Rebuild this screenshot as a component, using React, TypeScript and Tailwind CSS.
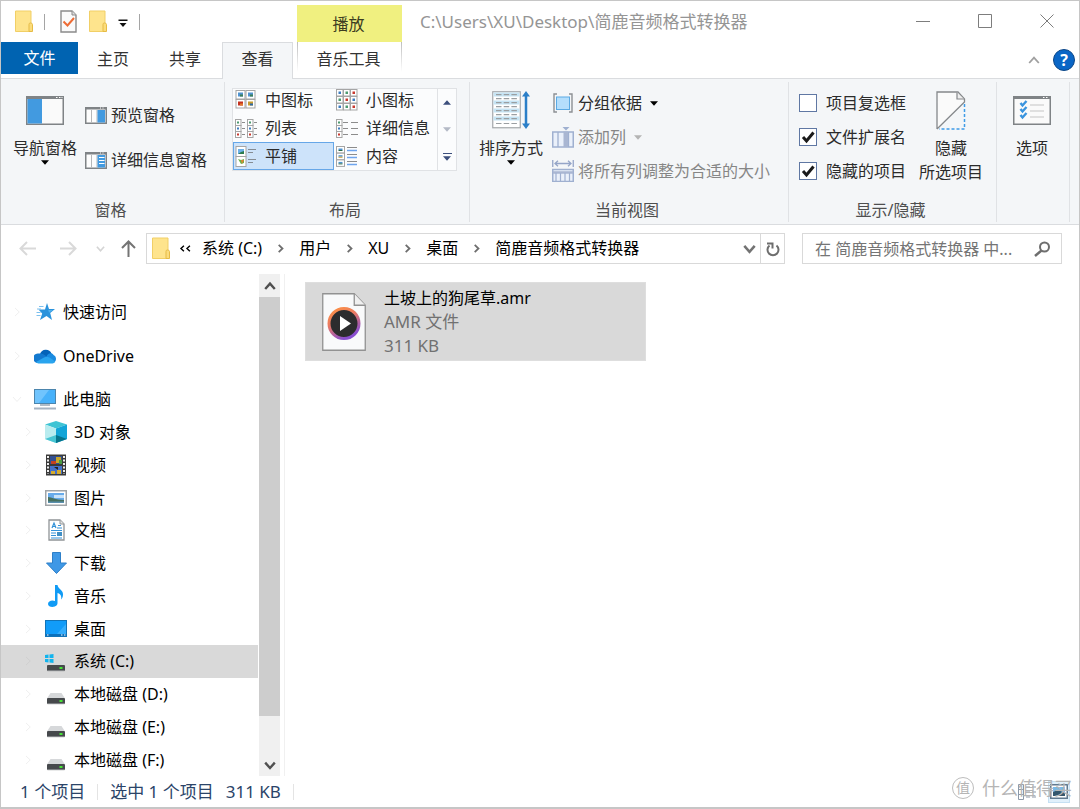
import React, { ReactNode, useState } from "react";

/* ---------- Small glyphs ---------- */

function Caret({ className = "text-black" }: { className?: string }) {
  return (
    <svg width="8" height="5" viewBox="0 0 8 5" className={className} aria-hidden="true">
      <path d="M0 0.300h8L4 4.800z" fill="currentColor" />
    </svg>
  );
}

function Chevron({ dir, size = 10, width = 1.8, className = "" }: { dir: "up" | "down" | "right"; size?: number; width?: number; className?: string }) {
  const d = { up: "M1 7.5 5 3l4 4.5", down: "M1 3l4 4.5L9 3", right: "M3 1l4.2 4L3 9" }[dir];
  return (
    <svg width={size} height={size} viewBox="0 0 10 10" className={className} aria-hidden="true">
      <path d={d} fill="none" stroke="currentColor" strokeWidth={width} />
    </svg>
  );
}

function FolderIcon() {
  return (
    <svg width="18" height="23" viewBox="0 0 18 23" className="shrink-0" aria-hidden="true">
      <path d="M.5 1h15.500v20.500H.5z" fill="#fee48d" stroke="#f1cf66" />
      <path d="M14 14.500c0-1 .5-1.500 1.500-1.500s2 .5 2 1.500V21.500H14z" fill="#fbdc7c" stroke="#e6bb45" />
    </svg>
  );
}

function CheckPageIcon() {
  return (
    <svg width="17" height="23" viewBox="0 0 17 23" aria-hidden="true">
      <path d="M1 1h11l4 4v17H1z" fill="#fafafa" stroke="#8b8b8b" strokeWidth="1.400" />
      <path d="M12 1v4h4" fill="#ddd" stroke="#8b8b8b" />
      <path d="M3.500 11.500l4 4 6.500-7.500" fill="none" stroke="#ee6c35" strokeWidth="2" />
    </svg>
  );
}

/* ---------- Ribbon icons ---------- */

function NavPaneIcon() {
  return (
    <svg width="38" height="29" viewBox="0 0 38 29" aria-hidden="true">
      <rect x=".75" y=".75" width="36.500" height="27.500" fill="#fafafa" stroke="#7f8386" strokeWidth="1.500" />
      <path d="M0 0h38v3H0z" fill="#7f8386" />
      <path d="M30 1.500h1.500M33 1.500h1.500M35.500 1.500h1" stroke="#fff" />
      <path d="M1.500 3h14.500v24.500H1.500z" fill="#429ae0" />
    </svg>
  );
}

function SidePaneIcon({ lines = false }: { lines?: boolean }) {
  return (
    <svg width="22" height="17" viewBox="0 0 22 17" aria-hidden="true">
      <rect x=".75" y=".75" width="20.500" height="15.500" fill="#fdfdfd" stroke="#7f8386" strokeWidth="1.500" />
      <path d="M0 0h22v2.500H0z" fill="#7f8386" />
      <path d="M15 1h1M17.500 1h1" stroke="#fff" />
      <path d="M6.500 3v12.500M12 3v12.500" stroke="#b5b7b9" />
      <path d="M12.500 3H20v12.500h-7.500z" fill="#429ae0" />
      {lines && <path d="M14 5.500h5.500M14 8.500h5.500M14 11.500h5.500" stroke="#fff" />}
    </svg>
  );
}

const dotColors = ["#3d7cc0", "#4d9a70", "#c8392f"];

function MediumIcons() {
  return (
    <svg width="22" height="20" viewBox="0 0 22 20" aria-hidden="true">
      {[0, 1].map((c) =>
        [0, 1].map((r) => (
          <g key={`${c}${r}`}>
            <rect x={1 + c * 10} y={0.5 + r * 9} width="9" height="8.500" fill="#fff" stroke="#a5a5a5" />
            <rect x={3 + c * 10} y={2.5 + r * 9} width="5" height="4" fill={r ? (c ? "#c69a2d" : "#c4311d") : "#4f93cf"} />
            <rect x={5 + c * 10} y={4.5 + r * 9} width="3" height="2" fill={r ? (c ? "#2e6aa6" : "#e27b2c") : "#3e8059"} />
          </g>
        ))
      )}
    </svg>
  );
}

function SmallIcons() {
  return (
    <svg width="22" height="22" viewBox="0 0 22 22" aria-hidden="true">
      {[0, 1, 2].map((c) =>
        [0, 1, 2].map((r) => (
          <g key={`${c}${r}`}>
            <rect x={0.5 + c * 7} y={0.5 + r * 7} width="6.500" height="6.500" fill="#fff" stroke="#a5a5a5" />
            <rect x={2.5 + c * 7} y={2.5 + r * 7} width="2.500" height="2.500" fill={dotColors[(c + (r === 1 ? 1 : 0)) % 3]} />
          </g>
        ))
      )}
    </svg>
  );
}

function ListIcon({ details = false }: { details?: boolean }) {
  const cols = details ? [0] : [0, 12];
  return (
    <svg width="22" height="19" viewBox="0 0 22 19" aria-hidden="true">
      {cols.map((x) =>
        [0, 1, 2].map((r) => (
          <g key={`${x}${r}`}>
            <rect x={x + 0.5} y={0.5 + r * 6} width="5.500" height="6" fill="#fff" stroke="#a5a5a5" />
            <rect x={x + 2} y={2.5 + r * 6} width="2" height="2" fill={dotColors[r === 1 ? 0 : r === 0 ? 1 : 2]} />
            <path d={`M${x + 7} ${3.5 + r * 6}h${details ? 5 : 3}${details ? "m3 0h7" : ""}`} stroke="#8c8c8c" />
          </g>
        ))
      )}
    </svg>
  );
}

function TilesIcon() {
  return (
    <svg width="22" height="21" viewBox="0 0 22 21" aria-hidden="true">
      <rect x="1" y=".5" width="10" height="10" fill="#fff" stroke="#a5a5a5" />
      <rect x="1" y="10.500" width="10" height="10" fill="#fff" stroke="#a5a5a5" />
      <path d="M3 3h6v5H3z" fill="#6db1e8" />
      <path d="M3 8l3-2 3-1v3z" fill="#2c7c4e" />
      <path d="M3 13l3 1 3-1v4l-3 1z" fill="#69b34c" />
      <path d="M6 14l3 0-2 4z" fill="#e0842f" />
      <path d="M13 3.500h8M13 6.500h5M13 13.500h8M13 16.500h5" stroke="#858c93" />
    </svg>
  );
}

function ContentIcon() {
  return (
    <svg width="22" height="21" viewBox="0 0 22 21" aria-hidden="true">
      {[0, 1, 2].map((r) => (
        <g key={r}>
          <rect x=".5" y={0.5 + r * 6.7} width="8" height="6.500" fill="#fff" stroke="#a5a5a5" />
          <rect x="2.500" y={2.5 + r * 6.7} width="4" height="1.500" fill="#4f93cf" />
          <rect x="2.500" y={4 + r * 6.7} width="4" height="1" fill={r === 1 ? "#c69a2d" : "#2c6c4e"} />
          <path d={`M11 ${1.5 + r * 7}h10`} stroke="#8c8c8c" />
          <path d={`M11 ${4.5 + r * 7}h10`} stroke="#6ea5ee" strokeWidth="1.500" />
        </g>
      ))}
    </svg>
  );
}

function SortIcon() {
  return (
    <svg width="38" height="38" viewBox="0 0 38 38" aria-hidden="true">
      <rect x=".75" y=".75" width="27.500" height="36" fill="#fff" stroke="#a3a7aa" strokeWidth="1.200" />
      <path d="M1.500 1.500h26v4h-26zM1.500 9.500h26v4h-26zM1.500 17.500h26v4h-26zM1.500 25.500h26v4h-26z" fill="#c6e4f4" />
      <path d="M4 3.700h21M4 7.700h21M4 11.700h21M4 15.700h21M4 19.700h21M4 23.700h21M4 27.700h21M4 32.500h21" stroke="#9b9fa2" strokeDasharray="5.500 2.200" strokeWidth="1.200" />
      <path d="M34 4v30" stroke="#2b7fc8" strokeWidth="2.500" />
      <path d="M34 0l4 5.500h-8zM34 38l4-5.500h-8z" fill="#2b7fc8" />
    </svg>
  );
}

function GroupByIcon() {
  return (
    <svg width="20" height="20" viewBox="0 0 20 20" aria-hidden="true">
      <path d="M4 1H1v18h3M16 1h3v18h-3" fill="none" stroke="#8c9094" strokeWidth="1.400" />
      <rect x="3.500" y="4" width="13" height="12.500" fill="#b4defc" stroke="#5aa9e3" />
    </svg>
  );
}

function AddColumnIcon() {
  return (
    <svg width="22" height="21" viewBox="0 0 22 21" aria-hidden="true">
      <rect x=".75" y="5" width="20.500" height="15" fill="#eaf0fa" stroke="#9fb0d0" strokeWidth="1.500" />
      <path d="M6 5v15M16.500 5v15" stroke="#9fb0d0" strokeWidth="1.300" />
      <path d="M11.500 4.500H16V20h-4.500z" fill="#a9b6d2" />
      <path d="M10.500 0h7L14 3.500z" fill="#9fb0d0" />
    </svg>
  );
}

function FitColumnsIcon() {
  return (
    <svg width="22" height="22" viewBox="0 0 22 22" aria-hidden="true">
      <path d="M.75 0v7M21.250 0v7M3 3.500h16M6 .8L3 3.500l3 2.700M16 .8l3 2.700-3 2.700" fill="none" stroke="#95a5c8" strokeWidth="1.300" />
      <rect x=".75" y="9.500" width="20.500" height="12" fill="#eaf0fa" stroke="#9fb0d0" strokeWidth="1.500" />
      <path d="M1 12.500h20" stroke="#a9b6d2" strokeWidth="2.500" />
      <path d="M4 13v8M8.500 13v8M13 13v8M17.500 13v8" stroke="#9fb0d0" strokeWidth="1.200" />
    </svg>
  );
}

function HideIcon() {
  return (
    <svg width="30" height="39" viewBox="0 0 30 39" aria-hidden="true">
      <path d="M1 38V1h21l6 7v3z" fill="#fafafa" />
      <path d="M1 38V1h21l6.500 7v3L1 38" fill="none" stroke="#85888b" strokeWidth="1.300" />
      <path d="M21 1.500V8h7" fill="#eee" stroke="#85888b" strokeWidth="1.200" />
      <path d="M28.500 13v25H3" fill="none" stroke="#3e9be6" strokeWidth="1.500" strokeDasharray="3 2" />
    </svg>
  );
}

function OptionsIcon() {
  return (
    <svg width="38" height="29" viewBox="0 0 38 29" aria-hidden="true">
      <rect x=".75" y=".75" width="36.500" height="27.500" fill="#fafafa" stroke="#7f8386" strokeWidth="1.500" />
      <path d="M0 0h38v3H0z" fill="#7f8386" />
      <path d="M30 1.500h1.500M33 1.500h1.500" stroke="#fff" />
      {[0, 6, 12].map((y) => (
        <g key={y}>
          <path d={`M7.500 ${y + 7}l2 2.500 4-4.500`} fill="none" stroke="#3a94de" strokeWidth="2.400" />
          <path d={`M17 ${y + 9}h14`} stroke="#c4c4c4" />
        </g>
      ))}
    </svg>
  );
}

/* ---------- Navigation pane icons ---------- */

function StarIcon() {
  return (
    <svg width="20" height="18" viewBox="0 0 20 18" aria-hidden="true">
      <path d="M12 0l2 6h6l-4.800 4L17 17l-5.500-4L5 17l2.200-6.500L3.500 6.500H10z" fill="#2a93dc" />
      <path d="M4 3.500h4.500M2 6h4M1.500 9.500h4M1.500 12.500h4" stroke="#7cc0ee" />
      <path d="M12 2l1.200 5H18l-4 2.800z" fill="#4fb2f0" />
    </svg>
  );
}

function CloudIcon() {
  return (
    <svg width="22" height="15" viewBox="0 0 22 15" aria-hidden="true">
      <path d="M6 5A6.200 6.200 0 0117.500 4.500l-2 5-9 1.500z" fill="#0463b8" />
      <path d="M5 4.500c3-.5 5 .5 9 4L3 14A4.800 4.800 0 015 4.500z" fill="#1379cf" />
      <path d="M12.500 7.500c1.500-4 6-4 7-1.500 3.500 1.500 3 6 .5 8z" fill="#1a8be0" />
      <path d="M2 13l8-4.500c3-1.500 5-.5 11 4-1 1.800-2 2-3.500 2H5.500C4 14.500 3 14 2 13z" fill="#29a4ee" />
    </svg>
  );
}

function ComputerIcon() {
  return (
    <svg width="22" height="21" viewBox="0 0 22 21" aria-hidden="true">
      <rect x=".5" y=".5" width="21" height="14" fill="#47b1fa" stroke="#4c85ad" />
      <path d="M1 1h14L5 14H1z" fill="#70c4fd" />
      <path d="M6 16h10" stroke="#95a5b3" strokeWidth="1.500" />
      <path d="M0 19.500h22" stroke="#a5b3c2" strokeWidth="2" />
    </svg>
  );
}

function CubeIcon() {
  return (
    <svg width="22" height="22" viewBox="0 0 22 22" aria-hidden="true">
      <path d="M11 0l11 3.500-11 4-11-4z" fill="#3fc4d4" />
      <path d="M0 3.500l11 4V22L0 18z" fill="#b9ecef" />
      <path d="M0 18l11-4v8z" fill="#47c5d3" />
      <path d="M22 3.500l-11 4V22l11-4z" fill="#12a5d8" />
      <path d="M22 18l-11-4v8z" fill="#06758c" />
    </svg>
  );
}

function VideoIcon() {
  return (
    <svg width="20" height="22" viewBox="0 0 20 22" aria-hidden="true">
      <path d="M0 .5h20v21H0z" fill="#3a3a3a" />
      <path d="M2 2v18M18 2v18" stroke="#eee" strokeWidth="2" strokeDasharray="2 1.500" />
      <path d="M4 2h12v8H4z" fill="#324f91" />
      <path d="M4 12h12v8H4z" fill="#4371cc" />
      <path d="M5 7h5v3H5z" fill="#c34022" />
      <path d="M10 3h5v6h-5z" fill="#c8a62b" />
      <path d="M13 6h3v4h-3z" fill="#4a9b43" />
      <path d="M5 17h4v3H5zM11 16h4v4h-4z" fill="#d7ad2d" />
      <path d="M8 13h4v3z" fill="#222" />
    </svg>
  );
}

function PictureIcon() {
  return (
    <svg width="22" height="16" viewBox="0 0 22 16" aria-hidden="true">
      <rect x=".75" y=".75" width="20.500" height="14.500" fill="#fff" stroke="#a0a4a7" strokeWidth="1.500" />
      <path d="M3 3h16v10H3z" fill="#68abea" />
      <path d="M9 5h10v3H9z" fill="#c8e2f8" />
      <path d="M3 7c4 0 7 3 16 3v3H3z" fill="#47705e" />
      <path d="M3 11.500h16V13H3z" fill="#5a90b0" />
    </svg>
  );
}

function DocumentIcon() {
  return (
    <svg width="17" height="22" viewBox="0 0 17 22" aria-hidden="true">
      <path d="M1 1h11l4 4v16H1z" fill="#fff" stroke="#909497" strokeWidth="1.300" />
      <path d="M12 1v4h4" fill="#e5e5e5" stroke="#909497" />
      <path d="M4 9l2-5 2 5M5 7.500h2M10 6.500h3M9 9h5M3 11.500h11M3 14h5M3 16.500h5M3 19h11" fill="none" stroke="#3492d8" strokeWidth="1.200" />
      <path d="M9 13h5v4H9z" fill="#3f8fc5" />
    </svg>
  );
}

function DownloadIcon() {
  return (
    <svg width="21" height="22" viewBox="0 0 21 22" aria-hidden="true">
      <path d="M6.500.5h8V11h6l-10 10.500L.5 11h6z" fill="#3f98e6" stroke="#2d7fc8" />
    </svg>
  );
}

function MusicIcon() {
  return (
    <svg width="16" height="22" viewBox="0 0 16 22" aria-hidden="true">
      <path d="M7 0h2.500c.5 4 6 5 5.500 10-.1 2-1 3.500-2 4.500 1-4-1-6-3.500-6.500V18c0 5-9.500 5-9.500 1 0-3 4-4.500 7-3z" fill="#109bf5" />
    </svg>
  );
}

function DesktopIcon() {
  return (
    <svg width="22" height="17" viewBox="0 0 22 17" aria-hidden="true">
      <rect x=".5" y=".5" width="21" height="16" fill="#119cf9" stroke="#1274b8" />
      <path d="M12 14L21 4v10z" fill="#35aefd" />
      <path d="M1 15h20" stroke="#0a62a6" strokeWidth="1.500" />
      <path d="M2 15h1.500M16 15h1.500M19 15h1.500" stroke="#fff" />
    </svg>
  );
}

function DriveIcon({ system = false }: { system?: boolean }) {
  return (
    <svg width="22" height="18" viewBox="0 0 22 18" className="mt-1" aria-hidden="true">
      <path d="M5.500 6h11l3.500 5.500H2z" fill="#d6d8da" />
      <rect x="2" y="11" width="18" height="6" rx="1" fill="#46494c" />
      <path d="M2.500 16.700h17" stroke="#8b8e90" />
      <path d="M14.500 14h3" stroke="#46e236" strokeWidth="2" />
      {system && (
        <>
          <path d="M0 0h9.500v9H0z" fill="#d9d9d9" />
          <path d="M0 1l3.500-.5V4H0zM4.500.5L8.500 0v4h-4zM0 5h3.500v3.500L0 8zM4.500 5h4v4l-4-.5z" fill="#12b4ee" />
        </>
      )}
    </svg>
  );
}

function AudioFileIcon() {
  return (
    <svg width="44" height="58" viewBox="0 0 44 58" className="shrink-0" aria-hidden="true">
      <defs>
        <linearGradient id="ring" x1="0" y1="0" x2=".5" y2="1">
          <stop offset="0" stopColor="#ff9340" />
          <stop offset=".45" stopColor="#ea7a62" />
          <stop offset="1" stopColor="#8a4fd0" />
        </linearGradient>
      </defs>
      <path d="M.75.75h31.500l11 11.500v45H.75z" fill="#f9fafb" stroke="#929292" strokeWidth="1.300" />
      <path d="M32.250.75v11.500h11" fill="#f0f0f0" stroke="#929292" strokeWidth="1.300" />
      <circle cx="22" cy="30.500" r="15" fill="#2c2c2e" stroke="url(#ring)" strokeWidth="3" />
      <path d="M18 23l11 7.500L18 38z" fill="#fff" />
    </svg>
  );
}

/* ---------- Ribbon parts ---------- */

function RibbonGroup({ label, className, children }: { label: string; className: string; children: ReactNode }) {
  return (
    <section aria-label={label || undefined} className={`flex h-[140px] shrink-0 flex-col border-r border-[#e0e2e5] ${className}`}>
      <div className="flex flex-1 items-start">{children}</div>
      <div className="h-6 pr-1 text-center leading-6 text-[#4f4f4f]">{label}</div>
    </section>
  );
}

function BigButton({ icon, lines, caret = false, className = "" }: { icon: ReactNode; lines: string[]; caret?: boolean; className?: string }) {
  return (
    <button type="button" className={`mt-2 flex shrink-0 flex-col items-center leading-6 text-[#2b2b2b] ${className}`}>
      <span className="mb-1.5 flex h-10 items-center justify-center">{icon}</span>
      {lines.map((l) => (
        <span key={l} className="whitespace-nowrap">{l}</span>
      ))}
      {caret && <Caret />}
    </button>
  );
}

function RowButton({ icon, label, caret = false, disabled = false }: { icon: ReactNode; label: string; caret?: boolean; disabled?: boolean }) {
  return (
    <button type="button" disabled={disabled} className={`flex h-[34px] items-center whitespace-nowrap ${disabled ? "text-[#868686]" : "text-[#2b2b2b]"}`}>
      <span className="mr-1 flex w-[22px] justify-center">{icon}</span>
      {label}
      {caret && <span className="ml-2"><Caret className={disabled ? "text-[#b4b4b4]" : "text-black"} /></span>}
    </button>
  );
}

function LayoutOption({ icon, label, selected = false }: { icon: ReactNode; label: string; selected?: boolean }) {
  return (
    <button
      type="button"
      aria-pressed={selected}
      className={`flex h-[28px] items-center gap-2 border pl-px text-left whitespace-nowrap text-[#2b2b2b] ${selected ? "border-[#66a7e8] bg-[#cde3fa]" : "border-transparent"}`}
    >
      <span className="flex w-[22px] shrink-0 justify-center">{icon}</span>
      {label}
    </button>
  );
}

function TickBox({ label, initial }: { label: string; initial: boolean }) {
  const [on, setOn] = useState(initial);
  return (
    <label className="flex h-[34px] items-center gap-[9px] whitespace-nowrap text-[#2b2b2b]">
      <span className="relative flex">
        <input type="checkbox" checked={on} onChange={() => setOn(!on)} className="size-[18px] appearance-none border border-[#5f77a3] bg-white" />
        {on && (
          <svg width="18" height="18" viewBox="0 0 18 18" className="pointer-events-none absolute inset-0" aria-hidden="true">
            <path d="M4 9l3.500 4L14.500 4.500" fill="none" stroke="#1a1a1a" strokeWidth="3" />
          </svg>
        )}
      </span>
      {label}
    </label>
  );
}

/* ---------- Data ---------- */

const devices: { label: string; icon: ReactNode; selected?: boolean }[] = [
  { label: "3D 对象", icon: <CubeIcon /> },
  { label: "视频", icon: <VideoIcon /> },
  { label: "图片", icon: <PictureIcon /> },
  { label: "文档", icon: <DocumentIcon /> },
  { label: "下载", icon: <DownloadIcon /> },
  { label: "音乐", icon: <MusicIcon /> },
  { label: "桌面", icon: <DesktopIcon /> },
  { label: "系统 (C:)", icon: <DriveIcon system />, selected: true },
  { label: "本地磁盘 (D:)", icon: <DriveIcon /> },
  { label: "本地磁盘 (E:)", icon: <DriveIcon /> },
  { label: "本地磁盘 (F:)", icon: <DriveIcon /> },
];

const crumbs = ["系统 (C:)", "用户", "XU", "桌面", "简鹿音频格式转换器"];

function NavRow({ icon, label, open = false, nested = false, selected = false, className = "" }: { icon: ReactNode; label: string; open?: boolean; nested?: boolean; selected?: boolean; className?: string }) {
  return (
    <button type="button" className={`flex w-[257px] items-center text-left whitespace-nowrap text-black ${nested ? "pl-[22px]" : "pl-[11px]"} ${selected ? "bg-[#d9d9d9]" : ""} ${className}`}>
      <Chevron dir={open ? "down" : "right"} width={1} className={selected ? "text-[#d0d0d0]" : "text-[#f0f0f0]"} />
      <span className="mr-[7px] ml-3 flex w-[22px] shrink-0 justify-center">{icon}</span>
      {label}
    </button>
  );
}

/* ---------- Window sections ---------- */

function TitleBar() {
  return (
    <header className="flex h-[41px] items-stretch">
      <div className="flex w-[296px] shrink-0 items-center pl-[14px]">
        <FolderIcon />
        <span className="mx-[11px] h-4 w-px bg-[#a5a5a5]" />
        <button type="button" aria-label="属性" className="ml-1"><CheckPageIcon /></button>
        <button type="button" aria-label="新建文件夹" className="ml-3"><FolderIcon /></button>
        <button type="button" aria-label="自定义快速访问工具栏" className="ml-[11px] pt-1">
          <svg width="10" height="9" viewBox="0 0 10 9" aria-hidden="true">
            <path d="M.5.5h9v1.500h-9zM1.500 4h7L5 8z" fill="#111" />
          </svg>
        </button>
        <span className="ml-[11px] h-4 w-px bg-[#a5a5a5]" />
      </div>
      <div className="mt-1 flex w-[105px] shrink-0 items-center justify-center bg-[#f0f080] pr-0.5 text-[#3c3c20]">播放</div>
      <h1 className="flex-1 self-center pl-[18px] text-[17px] leading-6 whitespace-nowrap text-[#959595]">C:\Users\XU\Desktop\简鹿音频格式转换器</h1>
      <div className="flex items-center pr-px pb-0.5 text-[#7d7d7d]">
        <button type="button" aria-label="最小化" className="flex w-[62px] justify-center">
          <svg width="14" height="14" viewBox="0 0 14 14"><path d="M0 7.500h14" stroke="currentColor" /></svg>
        </button>
        <button type="button" aria-label="最大化" className="flex w-[62px] justify-center">
          <svg width="14" height="14" viewBox="0 0 14 14"><path d="M.5.5h13v13H.5z" fill="none" stroke="currentColor" /></svg>
        </button>
        <button type="button" aria-label="关闭" className="flex w-[62px] justify-center">
          <svg width="14" height="14" viewBox="0 0 14 14"><path d="M.5.5l13 13M13.500.5l-13 13" fill="none" stroke="currentColor" /></svg>
        </button>
      </div>
    </header>
  );
}

function Tabs() {
  return (
    <nav className="flex h-9 items-start text-[#333]">
      <button type="button" className="h-8 w-[77px] bg-[#0063b1] text-white">文件</button>
      <button type="button" className="h-[34px] w-[72px] pr-0.5">主页</button>
      <button type="button" className="h-[34px] w-[72px] pr-0.5">共享</button>
      <button type="button" className="relative h-[37px] w-[71px] border border-b-0 border-[#dadcdf] bg-[#f4f6f8] pb-1">查看</button>
      <div className="ml-1 flex h-[34px] w-[105px] items-stretch justify-between">
        <span className="mb-1 w-px bg-gradient-to-b from-[#bdbdbd] to-white" />
        <button type="button" className="flex-1 pr-0.5">音乐工具</button>
        <span className="mb-1 w-px bg-gradient-to-b from-[#bdbdbd] to-white" />
      </div>
      <div className="ml-auto flex items-center gap-[13px] pt-[7px] pr-1">
        <button type="button" aria-label="最小化功能区" className="text-[#a0a0a0]"><Chevron dir="up" size={12} width={1.5} /></button>
        <button type="button" aria-label="帮助" className="flex size-[22px] items-center justify-center rounded-full border border-[#0c4687] bg-[#0a66c6] text-base leading-5 font-bold text-white">?</button>
      </div>
    </nav>
  );
}

function Ribbon() {
  return (
    <div className="flex h-[147px] overflow-hidden border-y border-[#dadcdf] bg-[#f4f6f8] pt-[3px]">
      <RibbonGroup label="窗格" className="w-[224px]">
        <BigButton icon={<NavPaneIcon />} lines={["导航窗格"]} caret className="ml-3" />
        <div className="mt-4 ml-2 flex flex-col gap-[11px]">
          <RowButton icon={<SidePaneIcon />} label="预览窗格" />
          <RowButton icon={<SidePaneIcon lines />} label="详细信息窗格" />
        </div>
      </RibbonGroup>

      <RibbonGroup label="布局" className="w-[245px] px-[7px]">
        <div className="mt-1.5 flex h-[83px] w-[225px] overflow-hidden border border-[#e0e2e5] bg-[#fbfcfd]">
          <div className="grid flex-1 grid-cols-[101px_102px] content-end border-r border-[#e0e2e5]">
            <LayoutOption icon={<MediumIcons />} label="中图标" />
            <LayoutOption icon={<SmallIcons />} label="小图标" />
            <LayoutOption icon={<ListIcon />} label="列表" />
            <LayoutOption icon={<ListIcon details />} label="详细信息" />
            <LayoutOption icon={<TilesIcon />} label="平铺" selected />
            <LayoutOption icon={<ContentIcon />} label="内容" />
          </div>
          <div className="flex w-[18px] flex-col">
            <button type="button" aria-label="上一行" className="flex flex-1 items-center justify-center text-[#3c4f7c]">
              <span className="rotate-180"><Caret className="" /></span>
            </button>
            <button type="button" aria-label="下一行" className="flex flex-1 items-center justify-center text-[#b4bac6]"><Caret className="" /></button>
            <button type="button" aria-label="更多" className="flex flex-1 flex-col items-center justify-center gap-[2px] text-[#3c4f7c]">
              <span className="h-px w-[9px] bg-[#3c4f7c]" />
              <Caret className="" />
            </button>
          </div>
        </div>
      </RibbonGroup>

      <RibbonGroup label="当前视图" className="w-[319px]">
        <BigButton icon={<SortIcon />} lines={["排序方式"]} caret className="ml-[9px]" />
        <div className="mt-1 ml-[9px] flex flex-col">
          <RowButton icon={<GroupByIcon />} label="分组依据" caret />
          <RowButton icon={<AddColumnIcon />} label="添加列" caret disabled />
          <RowButton icon={<FitColumnsIcon />} label="将所有列调整为合适的大小" disabled />
        </div>
      </RibbonGroup>

      <RibbonGroup label="显示/隐藏" className="w-[208px]">
        <div className="mt-1 ml-[10px] flex flex-col">
          <TickBox label="项目复选框" initial={false} />
          <TickBox label="文件扩展名" initial />
          <TickBox label="隐藏的项目" initial />
        </div>
        <BigButton icon={<HideIcon />} lines={["隐藏", "所选项目"]} className="ml-[13px]" />
      </RibbonGroup>

      <RibbonGroup label="" className="w-[73px]">
        <BigButton icon={<OptionsIcon />} lines={["选项"]} className="ml-4" />
      </RibbonGroup>
    </div>
  );
}

function Arrow({ d, className }: { d: string; className: string }) {
  return (
    <svg width="17" height="17" viewBox="0 0 17 17" className={className} aria-hidden="true">
      <path d={d} fill="none" stroke="currentColor" strokeWidth="2" />
    </svg>
  );
}

function AddressRow() {
  return (
    <div className="flex h-[49px] items-center pr-[17px] pb-0.5 pl-[18px]">
      <button type="button" aria-label="后退" disabled><Arrow d="M17 8.500H1.500M8 2L1.500 8.500 8 15" className="text-[#d9d9d9]" /></button>
      <button type="button" aria-label="前进" disabled className="ml-6"><Arrow d="M0 8.500h15.500M9 2l6.500 6.500L9 15" className="text-[#d9d9d9]" /></button>
      <button type="button" aria-label="最近位置" className="ml-[19px] text-[#d4d4d4]"><Chevron dir="down" size={9} /></button>
      <button type="button" aria-label="上移" className="mr-[9px] ml-[15px]"><Arrow d="M8.500 17V1.500M2 8l6.500-6.500L15 8" className="text-[#747474]" /></button>
      <div className="flex h-[31px] flex-1 items-center border border-[#d9d9d9] pl-[5px] text-black">
        <FolderIcon />
        <span className="mr-[10px] ml-[9px] flex items-center">
          <Chevron dir="right" size={7} width={2} className="-scale-x-100" />
          <Chevron dir="right" size={7} width={2} className="-ml-px -scale-x-100" />
        </span>
        {crumbs.map((c, i) => (
          <React.Fragment key={c}>
            {i > 0 && <Chevron dir="right" size={9} width={2} className="mx-[14px] text-[#6e6e6e]" />}
            <a href="#" className="pb-0.5 whitespace-nowrap">{c}</a>
          </React.Fragment>
        ))}
        <button type="button" aria-label="历史记录" className="mr-1 ml-auto text-[#737373]"><Chevron dir="down" size={13} width={2} /></button>
        <button type="button" aria-label="刷新" className="flex h-full w-6 items-center justify-center border-l border-[#d9d9d9] text-[#6e6e6e]">
          <svg width="14" height="16" viewBox="0 0 14 16" aria-hidden="true">
            <path d="M10.500 4.500A5.500 5.500 0 113.500 4.500" fill="none" stroke="currentColor" strokeWidth="2" />
            <path d="M1 2.500h5.500v5" fill="none" stroke="currentColor" strokeWidth="2" />
          </svg>
        </button>
      </div>
      <div className="ml-[17px] flex h-[31px] w-[260px] items-center border border-[#d9d9d9] pr-[10px] pl-[12px]">
        <input type="search" aria-label="搜索" placeholder="在 简鹿音频格式转换器 中..." className="min-w-0 flex-1 bg-transparent outline-none placeholder:text-[#757575]" />
        <svg width="17" height="16" viewBox="0 0 17 16" className="text-[#6e6e6e]" aria-hidden="true">
          <circle cx="10.500" cy="6" r="4.500" fill="none" stroke="currentColor" strokeWidth="2" />
          <path d="M7.500 9.500L1 15" stroke="currentColor" strokeWidth="2.500" />
        </svg>
      </div>
    </div>
  );
}

function NavigationPane() {
  return (
    <aside className="flex w-[284px] shrink-0 border-r border-[#f0f0f0]">
      <div className="flex flex-1 flex-col pt-[22px]">
        <NavRow icon={<StarIcon />} label="快速访问" className="h-8" />
        <NavRow icon={<CloudIcon />} label="OneDrive" className="mt-3 h-8" />
        <div className="mt-[11px] flex flex-1 flex-col">
          <NavRow icon={<ComputerIcon />} label="此电脑" open className="min-h-7 flex-1" />
          {devices.map((d) => (
            <NavRow key={d.label} icon={d.icon} label={d.label} nested selected={d.selected} className="min-h-7 flex-1" />
          ))}
        </div>
      </div>
      <div className="mr-1 flex w-[21px] flex-col bg-[#f0f0f0] text-[#505050]">
        <button type="button" aria-label="向上滚动" className="flex h-[23px] items-center justify-center"><Chevron dir="up" size={12} width={2} /></button>
        <div className="flex-[419] bg-[#cdcdcd]" />
        <div className="flex-[37]" />
        <button type="button" aria-label="向下滚动" className="flex h-[23px] items-center justify-center"><Chevron dir="down" size={12} width={2} /></button>
      </div>
    </aside>
  );
}

function StatusBar() {
  return (
    <footer className="relative flex h-[31px] items-center pl-[19px] text-[17px] leading-6 text-[#2b4468]">
      <span>1 个项目</span>
      <span className="mx-3 h-4 w-px bg-[#e4e4e4]" />
      <span>选中 1 个项目</span>
      <span className="ml-3">311 KB</span>
      <span className="ml-3 h-4 w-px bg-[#e4e4e4]" />
      <div className="ml-auto flex items-center gap-3 pr-[9px]">
        <button type="button" aria-label="详细信息视图">
          <svg width="18" height="16" viewBox="0 0 18 16" aria-hidden="true">
            <path d="M.5.5h5v15h-5zM.5 5.500h5M.5 10.500h5" fill="#fff" stroke="#8d99a8" />
            <path d="M8 3h4M14 3h4M8 8h4M14 8h4M8 13h4M14 13h4" stroke="#8d99a8" />
          </svg>
        </button>
        <button type="button" aria-label="大缩略图视图" className="flex h-[22px] w-[22px] items-center justify-center border border-[#c5e0f3] bg-[#e0f0fb]">
          <svg width="18" height="15" viewBox="0 0 18 15" aria-hidden="true">
            <rect x=".75" y=".75" width="16.500" height="13.500" fill="#fff" stroke="#60798f" strokeWidth="1.500" />
            <path d="M3 3h12v5H3z" fill="#79b9e8" />
            <path d="M3 8l5-2 7 3v3H3z" fill="#34566c" />
          </svg>
        </button>
      </div>
      <div className="pointer-events-none absolute right-[7px] bottom-[7px] flex items-center gap-2 text-[18px] leading-6 text-[#b5b5b5]">
        <span className="flex size-[22px] items-center justify-center rounded-full border border-[#bdbdbd] bg-white text-sm leading-5">值</span>
        <span>什么值得买</span>
      </div>
    </footer>
  );
}

export default function App() {
  return (
    <div className="relative flex min-h-screen flex-col overflow-hidden border border-b-2 border-[#c6c6c6] bg-white font-['Noto_Sans','Noto_Sans_CJK_SC',sans-serif] text-base leading-6">
      <TitleBar />
      <Tabs />
      <Ribbon />
      <AddressRow />
      <main className="flex flex-1">
        <NavigationPane />
        <section className="flex-1 pt-2 pl-5" aria-label="文件">
          <button type="button" className="flex h-[79px] w-[341px] items-center border border-[#dedede] bg-[#d9d9d9] pl-4 text-left">
            <AudioFileIcon />
            <span className="ml-[18px] flex flex-col leading-6 text-[#717171]">
              <span className="text-black">土坡上的狗尾草.amr</span>
              <span className="text-[17px]">AMR 文件</span>
              <span className="text-[17px]">311 KB</span>
            </span>
          </button>
        </section>
      </main>
      <StatusBar />
    </div>
  );
}
